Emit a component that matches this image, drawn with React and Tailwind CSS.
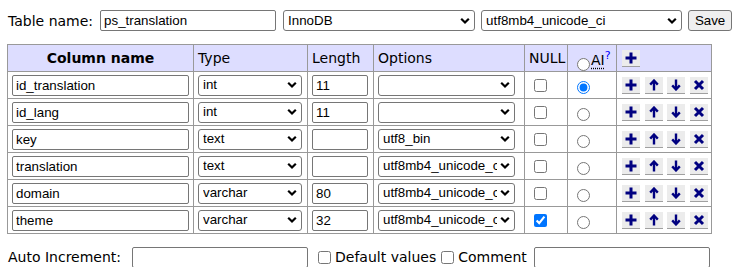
import React from 'react';

const rows = [
  { name: 'id_translation', type: 'int', length: '11', options: '', nullable: false, ai: true },
  { name: 'id_lang', type: 'int', length: '11', options: '', nullable: false, ai: false },
  { name: 'key', type: 'text', length: '', options: 'utf8_bin', nullable: false, ai: false },
  { name: 'translation', type: 'text', length: '', options: 'utf8mb4_unicode_ci', nullable: false, ai: false },
  { name: 'domain', type: 'varchar', length: '80', options: 'utf8mb4_unicode_ci', nullable: false, ai: false },
  { name: 'theme', type: 'varchar', length: '32', options: 'utf8mb4_unicode_ci', nullable: true, ai: false },
];

const Chevron = () => (
  <svg width="10" height="7" viewBox="0 0 10 7" className="pointer-events-none absolute right-[5px] top-1/2 -translate-y-1/2">
    <path d="M1.2 1.2 L5 5 L8.8 1.2" fill="none" stroke="#000" strokeWidth="2.2" />
  </svg>
);

const Select = ({ value, width }) => (
  <div className="relative inline-block align-middle" style={{ width }}>
    <select
      defaultValue={value}
      className="block h-[21px] w-full appearance-none rounded-[3px] border border-[#767676] bg-white pl-[4px] pr-[17px] font-['Liberation_Sans'] text-[13.33px] text-black outline-none"
    >
      <option value={value}>{value}</option>
    </select>
    <Chevron />
  </div>
);

const TextInput = ({ value, className }) => (
  <input
    type="text"
    defaultValue={value}
    className={`block h-[21px] rounded-[2px] border border-[#767676] bg-white px-[3px] font-['Liberation_Sans'] text-[13.33px] text-black outline-none ${className}`}
  />
);

const IconButton = ({ kind }) => (
  <span className="inline-flex h-[17px] w-[18px] shrink-0 items-center justify-center border-b border-[#a0a0a0] bg-[#ececec]">
    <svg width="12" height="12" viewBox="0 0 12 12">
      {kind === 'plus' && <path d="M6 0.5 V11.5 M0.5 6 H11.5" stroke="#000080" strokeWidth="3" fill="none" />}
      {kind === 'up' && (
        <>
          <path d="M6 3 V11.5" stroke="#000080" strokeWidth="2.4" fill="none" />
          <path d="M2.2 5.6 L6 1.6 L9.8 5.6" stroke="#000080" strokeWidth="2.4" fill="none" />
        </>
      )}
      {kind === 'down' && (
        <>
          <path d="M6 0.5 V9" stroke="#000080" strokeWidth="2.4" fill="none" />
          <path d="M2.2 6.4 L6 10.4 L9.8 6.4" stroke="#000080" strokeWidth="2.4" fill="none" />
        </>
      )}
      {kind === 'x' && <path d="M2 2 L10 10 M10 2 L2 10" stroke="#000080" strokeWidth="3" fill="none" />}
    </svg>
  </span>
);

export default function App() {
  return (
    <div className="bg-white pl-[7px] pt-[10px] font-['DejaVu_Sans'] text-[14px] leading-[18px] text-black">
      {/* table name row */}
      <div className="flex h-[21px] items-center">
        <span className="ml-[1px]">Table name:</span>
        <TextInput value="ps_translation" className="ml-[7px] w-[176px]" />
        <div className="ml-[7px]"><Select value="InnoDB" width={192} /></div>
        <div className="ml-[6px]"><Select value="utf8mb4_unicode_ci" width={201} /></div>
        <button className="ml-[6px] h-[21px] w-[44px] rounded-[3px] border border-[#767676] bg-[#efefef] font-['Liberation_Sans'] text-[13.33px] text-black">
          Save
        </button>
      </div>

      {/* columns table */}
      <table className="mt-[13px] w-[704px] table-fixed border-collapse">
        <colgroup>
          <col className="w-[186px]" />
          <col className="w-[114px]" />
          <col className="w-[66px]" />
          <col className="w-[151px]" />
          <col className="w-[43px]" />
          <col className="w-[49px]" />
          <col className="w-[95px]" />
        </colgroup>
        <thead>
          <tr className="h-[27px] bg-[#ddf]">
            <th className="border border-[#999] px-[4px] text-center font-bold">Column name</th>
            <th className="border border-[#999] px-[4px] text-left font-normal">Type</th>
            <th className="border border-[#999] px-[4px] text-left font-normal">Length</th>
            <th className="border border-[#999] px-[4px] text-left font-normal">Options</th>
            <th className="border border-[#999] px-[4px] text-left font-normal">NULL</th>
            <th className="whitespace-nowrap border border-[#999] px-[4px] pt-[5px] text-left font-normal">
              <input type="radio" name="ai" className="m-0 ml-[5px] h-[13px] w-[13px] align-[-6px]" />
              <span className="ml-[1px] underline decoration-dotted underline-offset-[3px]">AI</span>
              <span className="relative -top-[6px] text-[11px] text-[#00f]">?</span>
            </th>
            <th className="border border-[#999] px-[4px] text-left font-normal">
              <span className="flex pl-[1px]">
                <IconButton kind="plus" />
              </span>
            </th>
          </tr>
        </thead>
        <tbody>
          {rows.map((row) => (
            <tr key={row.name} className="h-[27px]">
              <td className="border border-[#999] px-[4px]">
                <TextInput value={row.name} className="w-[177px]" />
              </td>
              <td className="border border-[#999] px-[4px]">
                <Select value={row.type} width={104} />
              </td>
              <td className="border border-[#999] px-[4px]">
                <TextInput value={row.length} className="w-[56px]" />
              </td>
              <td className="border border-[#999] px-[4px]">
                <Select value={row.options} width={137} />
              </td>
              <td className="border border-[#999] px-[4px]">
                <input
                  type="checkbox"
                  defaultChecked={row.nullable}
                  className="m-0 ml-[5px] block h-[13px] w-[13px]"
                />
              </td>
              <td className="border border-[#999] px-[4px]">
                <input
                  type="radio"
                  name="ai-row"
                  defaultChecked={row.ai}
                  className="m-0 ml-[5px] mt-[4px] block h-[13px] w-[13px]"
                />
              </td>
              <td className="border border-[#999] px-[4px]">
                <span className="flex pl-[1px]">
                  <IconButton kind="plus" />
                  <span className="ml-[5px] flex"><IconButton kind="up" /></span>
                  <span className="ml-[4px] flex"><IconButton kind="down" /></span>
                  <span className="ml-[5px] flex"><IconButton kind="x" /></span>
                </span>
              </td>
            </tr>
          ))}
        </tbody>
      </table>

      {/* bottom options */}
      <div className="mt-[13px] flex h-[20px] items-center">
        <span className="ml-[1px]">Auto Increment:</span>
        <TextInput value="" className="ml-[11px] h-[20px] w-[176px]" />
        <input type="checkbox" className="m-0 ml-[10px] h-[13px] w-[13px]" />
        <span className="ml-[4px]">Default values</span>
        <input type="checkbox" className="m-0 ml-[5px] h-[13px] w-[13px]" />
        <span className="ml-[4px]">Comment</span>
        <TextInput value="" className="ml-[7px] h-[20px] w-[176px]" />
      </div>
    </div>
  );
}
